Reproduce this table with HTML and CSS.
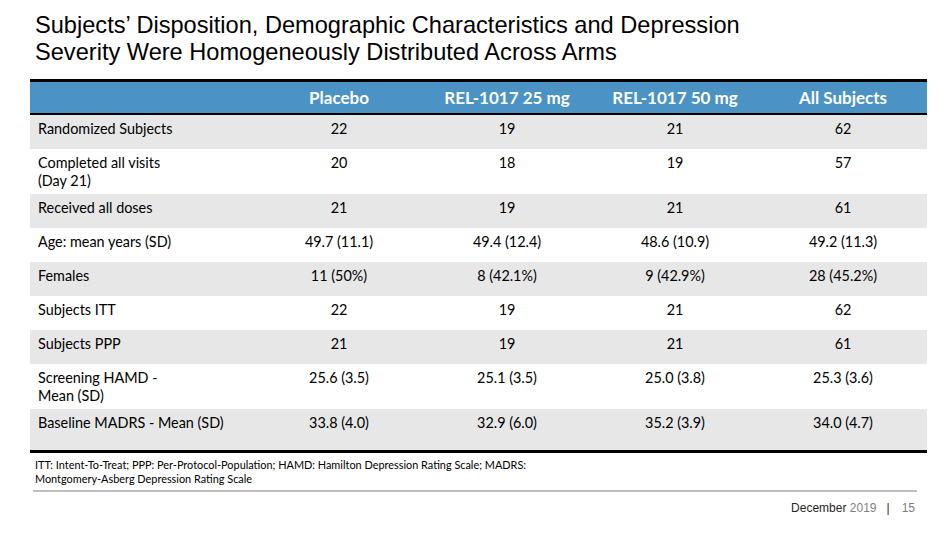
FILE: index.html
```html
<!DOCTYPE html>
<html lang="en">
<head>
<meta charset="utf-8">
<title>Subjects' Disposition</title>
<link rel="stylesheet" href="styles.css">
</head>
<body>
<div class="slide">
  <h1 class="title">Subjects’ Disposition, Demographic Characteristics and Depression<br>Severity Were Homogeneously Distributed Across Arms</h1>

  <div class="data">
    <div class="row head">
      <div class="cell label"></div>
      <div class="cell">Placebo</div>
      <div class="cell">REL-1017 25 mg</div>
      <div class="cell">REL-1017 50 mg</div>
      <div class="cell">All Subjects</div>
    </div>
    <div class="row single alt">
      <div class="cell label">Randomized Subjects</div>
      <div class="cell">22</div><div class="cell">19</div><div class="cell">21</div><div class="cell">62</div>
    </div>
    <div class="row double">
      <div class="cell label">Completed all visits<br>(Day 21)</div>
      <div class="cell">20</div><div class="cell">18</div><div class="cell">19</div><div class="cell">57</div>
    </div>
    <div class="row single alt">
      <div class="cell label">Received all doses</div>
      <div class="cell">21</div><div class="cell">19</div><div class="cell">21</div><div class="cell">61</div>
    </div>
    <div class="row single">
      <div class="cell label">Age: mean years (SD)</div>
      <div class="cell">49.7 (11.1)</div><div class="cell">49.4 (12.4)</div><div class="cell">48.6 (10.9)</div><div class="cell">49.2 (11.3)</div>
    </div>
    <div class="row single alt">
      <div class="cell label">Females</div>
      <div class="cell">11 (50%)</div><div class="cell">8 (42.1%)</div><div class="cell">9 (42.9%)</div><div class="cell">28 (45.2%)</div>
    </div>
    <div class="row single">
      <div class="cell label">Subjects ITT</div>
      <div class="cell">22</div><div class="cell">19</div><div class="cell">21</div><div class="cell">62</div>
    </div>
    <div class="row single alt">
      <div class="cell label">Subjects PPP</div>
      <div class="cell">21</div><div class="cell">19</div><div class="cell">21</div><div class="cell">61</div>
    </div>
    <div class="row double">
      <div class="cell label">Screening HAMD -<br>Mean (SD)</div>
      <div class="cell">25.6 (3.5)</div><div class="cell">25.1 (3.5)</div><div class="cell">25.0 (3.8)</div><div class="cell">25.3 (3.6)</div>
    </div>
    <div class="row last alt">
      <div class="cell label">Baseline MADRS - Mean (SD)</div>
      <div class="cell">33.8 (4.0)</div><div class="cell">32.9 (6.0)</div><div class="cell">35.2 (3.9)</div><div class="cell">34.0 (4.7)</div>
    </div>
  </div>

  <p class="footnote">ITT: Intent-To-Treat; PPP: Per-Protocol-Population; HAMD: Hamilton Depression Rating Scale; MADRS:<br>Montgomery-Asberg Depression Rating Scale</p>

  <div class="footer"><span class="month">December</span> <span class="year">2019</span><span class="sep">|</span><span class="page">15</span></div>
</div>
</body>
</html>
```

FILE: styles.css
```css
html, body {
  margin: 0;
  padding: 0;
  background: #ffffff;
}

.slide {
  width: 950px;
  height: 534px;
  overflow: hidden;
  padding-top: 12px;
  box-sizing: border-box;
}

.title {
  margin: 0 0 13px 35px;
  font-family: "Liberation Sans", Arial, sans-serif;
  font-weight: 400;
  font-size: 23.6px;
  line-height: 27px;
  color: #000000;
}

.data {
  margin-left: 30px;
  width: 897px;
  border-top: 3px solid #000000;
  border-bottom: 3px solid #000000;
  font-family: Lato, "Open Sans", sans-serif;
  font-size: 14.4px;
  color: #000000;
}

.row {
  display: grid;
  grid-template-columns: 225px repeat(4, 168px);
  box-sizing: border-box;
}

.cell {
  padding: 5px 8px 0;
  line-height: 18px;
  text-align: center;
}

.cell.label {
  text-align: left;
}

.head {
  height: 33px;
  background: #4a93c4;
  border-bottom: 2px solid #000000;
  color: #ffffff;
  font-weight: 700;
  font-size: 17px;
  align-items: center;
}

.head .cell {
  padding-top: 0;
}

.single { height: 34px; }
.double { height: 45px; }
.last { height: 41px; }

.alt { background: #e7e7e7; }

.footnote {
  margin: 5px 0 0 33px;
  width: 882px;
  padding: 0 0 4px 2px;
  border-bottom: 2px solid #bfbfbf;
  font-family: Lato, "Open Sans", sans-serif;
  font-size: 10.9px;
  line-height: 14px;
  color: #000000;
}

.footer {
  margin: 9px 35px 0 0;
  text-align: right;
  font-family: "Liberation Sans", Arial, sans-serif;
  font-size: 12px;
  line-height: 14px;
}

.month { color: #262626; }
.year { color: #7f7f7f; }
.sep { color: #262626; margin: 0 12px 0 10px; }
.page { color: #7f7f7f; }
```
